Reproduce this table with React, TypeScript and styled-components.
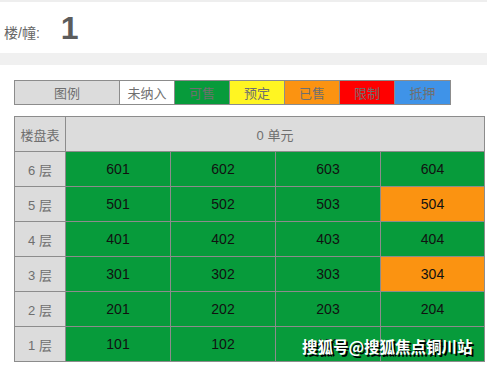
import React from 'react';
import styled, { createGlobalStyle } from 'styled-components';

const GlobalStyle = createGlobalStyle`
  html, body {
    margin: 0;
    padding: 0;
    background: #fff;
    font-family: "Liberation Sans", "Noto Sans CJK SC", sans-serif;
  }
`;

const Page = styled.div`
  position: relative;
  width: 487px;
  height: 365px;
  overflow: hidden;
`;

const Header = styled.div`
  height: 51px;
  border-top: 2px solid #eeeeee;
  display: flex;
  align-items: flex-end;
  padding-left: 4px;
  box-sizing: content-box;
`;

const HeaderLabel = styled.span`
  font-size: 14px;
  color: #666;
  margin-bottom: 11px;
`;

const HeaderValue = styled.span`
  font-size: 32px;
  font-weight: bold;
  color: #5c5c5c;
  margin-left: 21px;
  margin-bottom: 6px;
`;

const Band = styled.div`
  height: 12px;
  background: #f0f0f0;
`;

const Body = styled.div`
  padding: 15px 0 0 14px;
`;

const Table = styled.table`
  border-collapse: collapse;
  table-layout: fixed;
  font-family: "Liberation Sans", "Noto Sans CJK SC", sans-serif;
`;

const LegendTable = styled(Table)`
  width: 436px;
  margin-bottom: 11px;
`;

const LegendCell = styled.td<{ $bg: string }>`
  height: 23px;
  padding: 0;
  border: 1px solid #8c8c8c;
  background: ${({ $bg }) => $bg};
  color: #6f6f6f;
  font-size: 13px;
  text-align: center;
`;

const GridTable = styled(Table)`
  width: 470px;
`;

const HeadCell = styled.td`
  height: 34px;
  padding: 0;
  border: 1px solid #8c8c8c;
  background: #dcdcdc;
  color: #6f6f6f;
  font-size: 13px;
  text-align: center;
`;

const UnitCell = styled.td<{ $bg: string }>`
  height: 34px;
  padding: 0;
  border: 1px solid #8c8c8c;
  background: ${({ $bg }) => $bg};
  color: #111;
  font-size: 14px;
  text-align: center;
`;

const Watermark = styled.div`
  position: absolute;
  left: 302px;
  top: 335px;
  font-size: 15.5px;
  font-weight: bold;
  color: #fff;
  white-space: nowrap;
  text-shadow: 2px 2px 0 #000;
  font-family: "Noto Sans CJK SC", sans-serif;
`;

const GREEN = '#079b3b';
const ORANGE = '#fb9311';

const legend = [
  { label: '图例', bg: '#dcdcdc', w: 105 },
  { label: '未纳入', bg: '#ffffff', w: 55 },
  { label: '可售', bg: GREEN, w: 55 },
  { label: '预定', bg: '#fff522', w: 55 },
  { label: '已售', bg: ORANGE, w: 55 },
  { label: '限制', bg: '#ff0000', w: 55 },
  { label: '抵押', bg: '#3f93e8', w: 56 },
];

const floors = [6, 5, 4, 3, 2, 1];
const sold = ['504', '304'];

export default function App() {
  return (
    <Page>
      <GlobalStyle />
      <Header>
        <HeaderLabel>楼/幢:</HeaderLabel>
        <HeaderValue>1</HeaderValue>
      </Header>
      <Band />
      <Body>
        <LegendTable>
          <colgroup>
            {legend.map((l) => (
              <col key={l.label} style={{ width: l.w }} />
            ))}
          </colgroup>
          <tbody>
            <tr>
              {legend.map((l) => (
                <LegendCell key={l.label} $bg={l.bg}>
                  {l.label}
                </LegendCell>
              ))}
            </tr>
          </tbody>
        </LegendTable>
        <GridTable>
          <colgroup>
            <col style={{ width: 51 }} />
            <col style={{ width: 105 }} />
            <col style={{ width: 105 }} />
            <col style={{ width: 105 }} />
            <col style={{ width: 104 }} />
          </colgroup>
          <tbody>
            <tr>
              <HeadCell>楼盘表</HeadCell>
              <HeadCell colSpan={4}>0 单元</HeadCell>
            </tr>
            {floors.map((f) => (
              <tr key={f}>
                <HeadCell>{f} 层</HeadCell>
                {[1, 2, 3, 4].map((n) => {
                  const room = `${f}0${n}`;
                  return (
                    <UnitCell key={room} $bg={sold.includes(room) ? ORANGE : GREEN}>
                      {room}
                    </UnitCell>
                  );
                })}
              </tr>
            ))}
          </tbody>
        </GridTable>
      </Body>
      <Watermark>搜狐号@搜狐焦点铜川站</Watermark>
    </Page>
  );
}
